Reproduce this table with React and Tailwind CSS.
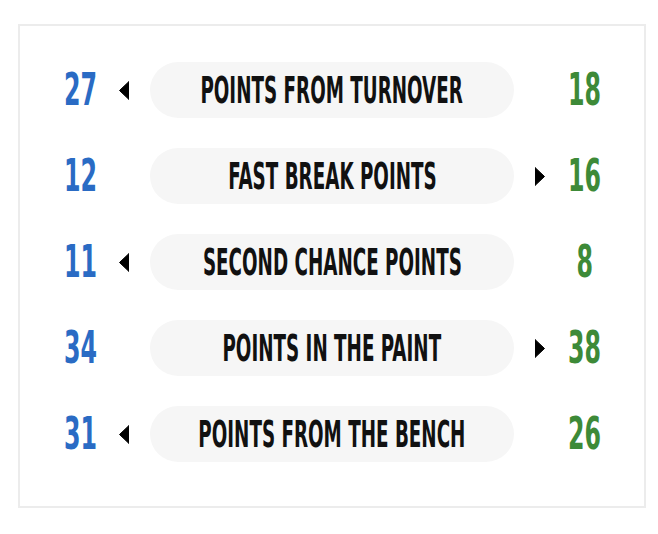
import React from "react";

const rows = [
  { home: 27, label: "Points from turnover", away: 18, lead: "home" },
  { home: 12, label: "Fast break points", away: 16, lead: "away" },
  { home: 11, label: "Second chance points", away: 8, lead: "home" },
  { home: 34, label: "Points in the paint", away: 38, lead: "away" },
  { home: 31, label: "Points from the bench", away: 26, lead: "home" },
];

const font = { fontFamily: '"DejaVu Sans Condensed", "DejaVu Sans", sans-serif' };

function Arrow({ dir }) {
  return (
    <svg width="10" height="19" viewBox="0 0 10 19" className="block">
      {dir === "left" ? (
        <polygon points="10,0.5 10,18.5 0.5,9.5" fill="#000" strokeLinejoin="round" stroke="#000" strokeWidth="1" />
      ) : (
        <polygon points="0,0.5 0,18.5 9.5,9.5" fill="#000" strokeLinejoin="round" stroke="#000" strokeWidth="1" />
      )}
    </svg>
  );
}

function Num({ value, color }) {
  return (
    <div className="w-[60px] flex justify-center">
      <span
        className={`inline-block scale-x-[0.6] text-[44px] font-bold leading-none ${color}`}
        style={font}
      >
        {value}
      </span>
    </div>
  );
}

export default function App() {
  return (
    <div className="w-[658px] h-[534px] bg-white pt-[24px] pl-[18px]">
      <div className="w-[628px] h-[484px] border-2 border-[#ececec] pt-[36px] pl-[31px] flex flex-col gap-[30px]">
        {rows.map((r, i) => (
          <div key={i} className="flex items-center h-[56px]">
            <Num value={r.home} color="text-[#2a6bc4]" />
            <div className="w-[16px] ml-[5px] flex justify-center">
              {r.lead === "home" && <Arrow dir="left" />}
            </div>
            <div className="ml-[18px] w-[364px] h-[56px] rounded-full bg-[#f6f6f6] flex items-center justify-center">
              <span
                className="inline-block whitespace-nowrap scale-x-[0.55] text-[37px] font-bold uppercase leading-none text-[#111111]"
                style={font}
              >
                {r.label}
              </span>
            </div>
            <div className="w-[16px] ml-[18px] flex justify-center">
              {r.lead === "away" && <Arrow dir="right" />}
            </div>
            <div className="ml-[7px]">
              <Num value={r.away} color="text-[#3d8a38]" />
            </div>
          </div>
        ))}
      </div>
    </div>
  );
}
